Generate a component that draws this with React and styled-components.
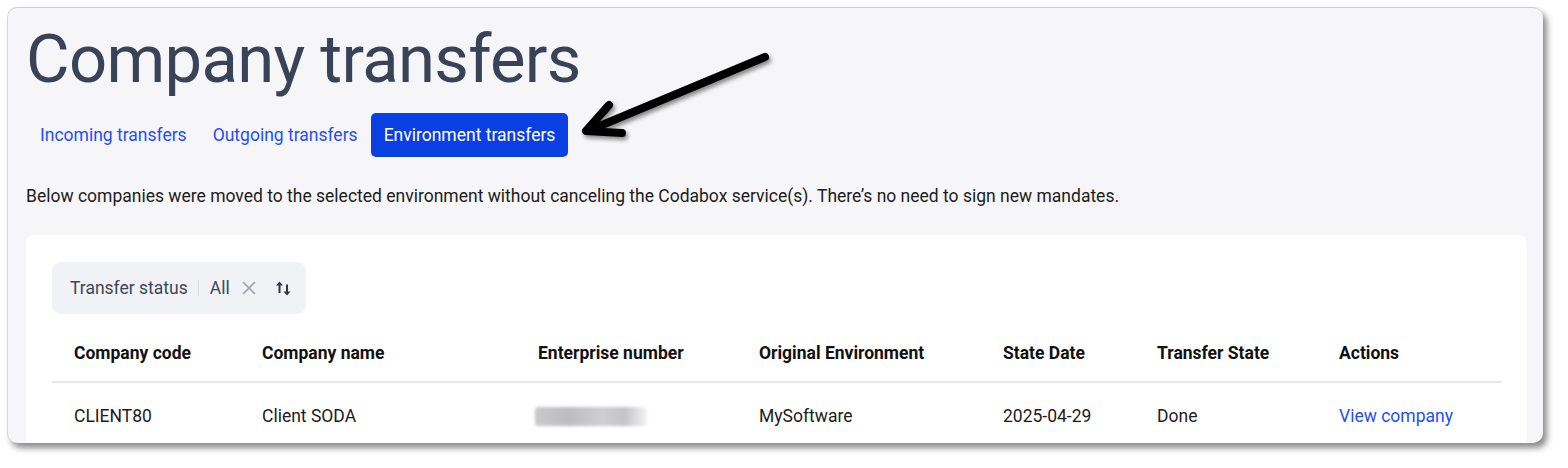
import React from "react";
import styled, { createGlobalStyle } from "styled-components";

const GlobalStyle = createGlobalStyle`
  body {
    margin: 0;
    background: #ffffff;
    font-family: Roboto, "Liberation Sans", Arial, sans-serif;
  }
`;

const Page = styled.div`
  width: 1568px;
  height: 468px;
  padding: 7px 0 0 7px;
  box-sizing: border-box;
  overflow: hidden;
`;

const Panel = styled.div`
  position: relative;
  width: 1536px;
  height: 436px;
  box-sizing: border-box;
  padding: 8px 16px 0 18px;
  background: #f6f6f8;
  border-top: 1px solid #cfcfd2;
  border-left: 1px solid #d8d8db;
  border-radius: 10px;
  box-shadow: 4px 5px 6px rgba(0, 0, 0, 0.45);
  overflow: hidden;
`;

const Title = styled.h1`
  margin: 0;
  font-size: 67px;
  font-weight: 400;
  line-height: 86px;
  letter-spacing: -0.7px;
  color: #394357;
`;

const Tabs = styled.div`
  display: flex;
  margin: 11px 0 0 1px;
`;

const Tab = styled.button`
  height: 44px;
  padding: 0 13px;
  border: none;
  border-radius: 5px;
  font-family: inherit;
  font-size: 17.5px;
  background: ${(p) => (p.$active ? "#0a3fe4" : "transparent")};
  color: ${(p) => (p.$active ? "#ffffff" : "#1f4dff")};
  cursor: pointer;
`;

const Intro = styled.p`
  margin: 28px 0 0;
  font-size: 17.5px;
  line-height: 22px;
  color: #1c1c1c;
`;

const Card = styled.div`
  margin-top: 28px;
  padding: 27px 26px 0;
  background: #ffffff;
  border-radius: 8px;
  height: 240px;
`;

const Chip = styled.div`
  display: inline-flex;
  align-items: center;
  height: 52px;
  padding: 0 0 0 18px;
  box-sizing: border-box;
  width: 254px;
  background: #f1f2f5;
  border-radius: 9px;
  font-size: 17.5px;
  color: #3d4658;
`;

const Divider = styled.span`
  width: 1px;
  height: 16px;
  background: #dcdde2;
  margin: 0 11px 0 10px;
`;

const IconSlot = styled.span`
  display: inline-flex;
  align-items: center;
  margin-left: ${(p) => p.$gap}px;
`;

const Table = styled.div`
  margin-top: 11px;
  display: grid;
  grid-template-columns: 188px 276px 221px 244px 154px 182px 185px;
`;

const HeadCell = styled.div`
  height: 56px;
  display: flex;
  align-items: center;
  padding-left: 22px;
  font-size: 17.5px;
  font-weight: 700;
  color: #111111;
  border-bottom: 2px solid #e6e6ec;
`;

const Cell = styled.div`
  height: 66px;
  display: flex;
  align-items: center;
  padding-left: 22px;
  font-size: 17.5px;
  color: ${(p) => (p.$link ? "#1f4dff" : "#1c1c1c")};
`;

const Blurred = styled.div`
  width: 112px;
  height: 19px;
  margin-left: -3px;
  border-radius: 3px;
  background: linear-gradient(90deg, #c9c9cb 0%, #bdbdc0 30%, #cfcfd1 60%, #c4c4c7 80%, #f4f4f5 100%);
  filter: blur(1.5px);
`;

const ArrowLayer = styled.svg`
  position: absolute;
  left: 560px;
  top: 30px;
  overflow: visible;
`;

function ClearIcon() {
  return (
    <svg width="14" height="14" viewBox="0 0 14 14">
      <path d="M1.5 1.5 L12.5 12.5 M12.5 1.5 L1.5 12.5" stroke="#9a9fa9" strokeWidth="1.6" strokeLinecap="round" />
    </svg>
  );
}

function SortIcon() {
  return (
    <svg width="17" height="17" viewBox="0 0 17 17">
      <path d="M4.5 3 V13" stroke="#2e3546" strokeWidth="2" />
      <path d="M1 5.5 L4.5 1.5 L8 5.5 Z" fill="#2e3546" />
      <path d="M12 4.5 V14" stroke="#2e3546" strokeWidth="2" />
      <path d="M8.5 11.5 L12 15.5 L15.5 11.5 Z" fill="#2e3546" />
    </svg>
  );
}

const headers = [
  "Company code",
  "Company name",
  "Enterprise number",
  "Original Environment",
  "State Date",
  "Transfer State",
  "Actions",
];

export default function App() {
  return (
    <>
      <GlobalStyle />
      <Page>
        <Panel>
          <Title>Company transfers</Title>
          <Tabs>
            <Tab>Incoming transfers</Tab>
            <Tab>Outgoing transfers</Tab>
            <Tab $active>Environment transfers</Tab>
          </Tabs>
          <Intro>
            Below companies were moved to the selected environment without canceling the Codabox service(s). There’s no need to sign new mandates.
          </Intro>
          <Card>
            <Chip>
              Transfer status
              <Divider />
              All
              <IconSlot $gap={12}>
                <ClearIcon />
              </IconSlot>
              <IconSlot $gap={19}>
                <SortIcon />
              </IconSlot>
            </Chip>
            <Table>
              {headers.map((h) => (
                <HeadCell key={h}>{h}</HeadCell>
              ))}
              <Cell>CLIENT80</Cell>
              <Cell>Client SODA</Cell>
              <Cell>
                <Blurred />
              </Cell>
              <Cell>MySoftware</Cell>
              <Cell>2025-04-29</Cell>
              <Cell>Done</Cell>
              <Cell $link>View company</Cell>
            </Table>
          </Card>
          <ArrowLayer width="200" height="100" viewBox="0 0 200 100">
            <defs>
              <filter id="arrowShadow" x="-20%" y="-20%" width="140%" height="140%">
                <feGaussianBlur in="SourceAlpha" stdDeviation="2" />
                <feOffset dx="2" dy="3" />
                <feComponentTransfer>
                  <feFuncA type="linear" slope="0.45" />
                </feComponentTransfer>
                <feMerge>
                  <feMergeNode />
                  <feMergeNode in="SourceGraphic" />
                </feMerge>
              </filter>
            </defs>
            <g filter="url(#arrowShadow)" stroke="#000" strokeWidth="8" strokeLinecap="round" strokeLinejoin="round" fill="none">
              <path d="M197 19 L22 92" />
              <path d="M41 67 L18 93 L54 95" />
            </g>
          </ArrowLayer>
        </Panel>
      </Page>
    </>
  );
}
